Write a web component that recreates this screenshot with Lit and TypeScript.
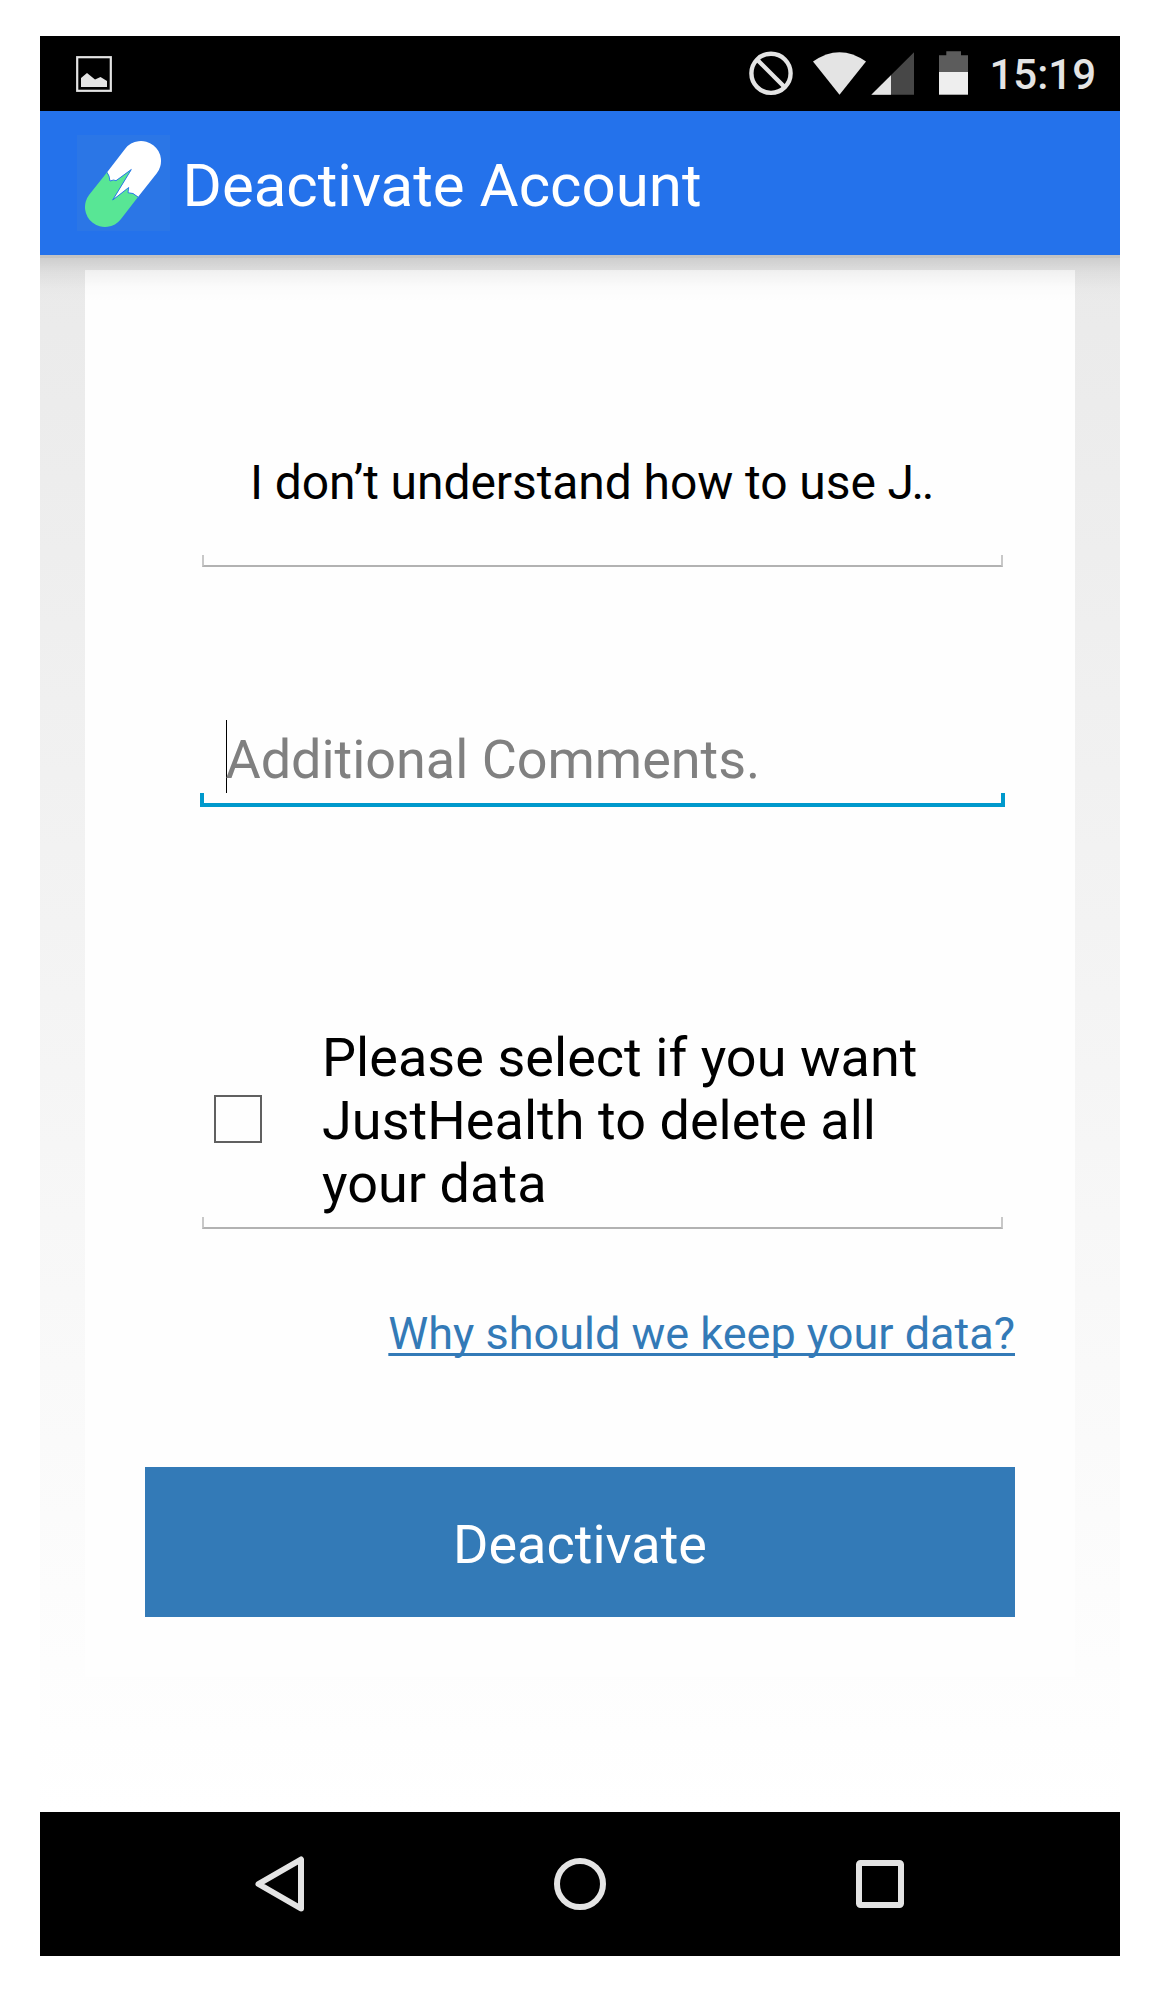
import { LitElement, html, css } from "lit";
import { customElement } from "lit/decorators.js";

@customElement("app-root")
export class AppRoot extends LitElement {
  static styles = css`
    :host { display: block; height: 2012px; background: #fff; font-family: Roboto, sans-serif; box-sizing: border-box; padding: 36px 36px 56px 40px; }
    * { box-sizing: border-box; }
    .screen { width: 1080px; height: 1920px; display: flex; flex-direction: column; }
    svg { display: block; flex: none; }
    .status { height: 75px; flex: none; background: #000; display: flex; align-items: center; justify-content: space-between; padding: 0 24px 0 36px; }
    .right { display: flex; align-items: center; }
    .time { color: #e4e4e4; font-size: 42px; font-weight: 500; line-height: 50px; margin-left: 21px; padding-top: 2px; white-space: nowrap; }
    .bar { height: 144px; flex: none; background: #2472eb; display: flex; align-items: center; padding-left: 36px; color: #fff; }
    .title { font-size: 60px; line-height: 70px; margin-left: 12.5px; white-space: nowrap; padding-top: 5px; }
    .body { flex: 1; position: relative; background: linear-gradient(#eaeaea, #fff); padding: 15px 45px 0; }
    .shadow { position: absolute; left: 0; right: 0; top: 0; height: 48px; background: linear-gradient(rgba(0,0,0,.17) 0 3px, rgba(0,0,0,.12) 3px, rgba(0,0,0,.05) 17px, rgba(0,0,0,.01) 32px, transparent); }
    .card { height: 1407px; background: #fefefe; padding: 0 60px; display: flex; flex-direction: column; }
    .field { margin: 157px 12px 0 57px; height: 140px; display: flex; flex-direction: column; }
    .spin { font-size: 48px; line-height: 56px; color: #000; padding: 28px 0 0 48px; flex: 1; white-space: nowrap; letter-spacing: -0.08px; }
    .tight { letter-spacing: -2.5px; }
    .line { height: 12px; flex: none; border: 2px solid #c8c8c8; border-top: 0; border-bottom-color: #b2b2b2; }
    .edit { margin: 153px 10px 0 55px; display: flex; flex-direction: column; }
    .input { height: 73px; border-left: 1px solid #000; margin-left: 26px; font-size: 54px; line-height: 63px; padding-top: 8px; text-indent: -1.5px; letter-spacing: -0.04px; color: #808080; white-space: nowrap; }
    .focus { height: 14px; border: 4px solid #0099cc; border-top: 0; }
    .check { margin: 218px 12px 0 57px; height: 204px; display: flex; flex-direction: column; }
    .row { flex: 1; min-height: 0; display: flex; align-items: flex-start; }
    .box { width: 48px; height: 48px; border: 2px solid #606060; margin: 70px 0 0 12px; flex: none; }
    .label { font-size: 54px; line-height: 63px; color: #000; margin: 1px 0 0 60px; white-space: nowrap; letter-spacing: 0.04px; }
    .link { align-self: flex-end; font-size: 45px; line-height: 53px; color: #337ab7; margin-top: 78px; white-space: nowrap; text-decoration: underline; text-decoration-thickness: 2.5px; text-underline-offset: 4px; text-decoration-skip-ink: none; }
    .btn { height: 150px; flex: none; background: #337ab7; color: #fff; font-size: 54px; display: flex; align-items: center; justify-content: center; margin-top: 107px; padding-top: 5px; }
    .nav { height: 144px; flex: none; background: #000; display: flex; align-items: center; padding-left: 210px; }
  `;

  render() {
    return html`<div class="screen">
      <div class="status">
        <svg width="36" height="36" viewBox="0 0 36 36"><rect x="1.2" y="1.2" width="33.6" height="33.6" fill="none" stroke="#e4e4e4" stroke-width="2.2"/><path d="M5 22 L11 17 L19 23.5 L24.5 21 L31 25 V31 H5Z" fill="#e4e4e4"/></svg>
        <div class="right">
          <svg width="220" height="75" viewBox="748 36 220 75">
            <circle cx="771" cy="73.3" r="19.6" fill="none" stroke="#e4e4e4" stroke-width="4.4"/>
            <path d="M757.5 60 L784.5 87" stroke="#e4e4e4" stroke-width="4.4"/>
            <path d="M813 61.5 Q839.5 42.8 866 61.5 L839.5 94.7Z" fill="#e4e4e4"/>
            <path d="M914 52.3 V94.7 H871.3Z" fill="#474747"/>
            <path d="M891 75.2 V94.7 H871.3Z" fill="#e4e4e4"/>
            <path d="M939 72 V55.2 H946.3 V51.3 H961 V55.2 H968 V72Z" fill="#5c5c5c"/>
            <path d="M939 72 H968 V94.7 H939Z" fill="#eee"/>
          </svg>
          <span class="time">15:19</span>
        </div>
      </div>
      <div class="bar">
        <svg width="94" height="96" viewBox="76 135 94 96">
          <rect x="77" y="135" width="93" height="96" fill="#2b76e6"/>
          <path d="M107.3 172 L125.2 148.7 A20 20 0 0 1 156.8 173.3 L138 197 L133 193.5 L128 192.7 L127 189 L112.7 200 L131.3 169.5 L116 180.7 L110 181Z" fill="#fff"/>
          <path d="M107.3 172 L89.2 194.7 A20 20 0 0 0 120.8 219.3 L138 197 L133 193.5 L128 192.7 L128.7 187.5 L112.7 200 L131.3 169.5 L116 180.7 L113.5 180 L110 181 L109 176Z" fill="#58e695"/>
          <path d="M107.3 173 L109 176 L110 181 L113.5 180 L116 180.7 L131.3 169.5 L112.7 200 L128.7 187.5 L128 192.7 L133 193.5 L138 197" fill="none" stroke="#2472eb" stroke-width=".9"/>
        </svg>
        <span class="title">Deactivate Account</span>
      </div>
      <div class="body">
        <div class="card">
          <div class="field"><div class="spin">I don’t understand how to use <span class="tight">J..</span></div><div class="line"></div></div>
          <div class="edit"><div class="input">Additional Comments.</div><div class="focus"></div></div>
          <div class="check">
            <div class="row"><span class="box"></span><div class="label">Please select if you want<br>JustHealth to delete all<br>your data</div></div>
            <div class="line"></div>
          </div>
          <div class="link">Why should we keep your data?</div>
          <div class="btn">Deactivate</div>
        </div>
        <div class="shadow"></div>
      </div>
      <div class="nav">
        <svg width="660" height="144" viewBox="250 1812 660 144" fill="none" stroke="#e4e4e4" stroke-width="6" stroke-linejoin="round">
          <path d="M258.5 1884 L301 1859.5 V1908.5Z"/>
          <circle cx="580" cy="1884" r="23"/>
          <rect x="859" y="1863" width="42" height="42" rx="1.5"/>
        </svg>
      </div>
    </div>`;
  }
}
